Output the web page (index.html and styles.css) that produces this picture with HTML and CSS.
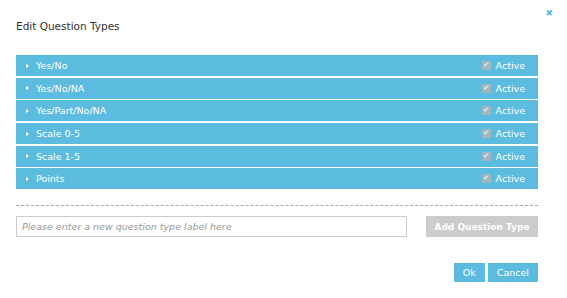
FILE: index.html
```html
<!DOCTYPE html>
<html lang="en">
<head>
    <meta charset="UTF-8">
    <title>Edit Question Types</title>
    <link rel="stylesheet" href="styles.css">
</head>
<body>
    <div class="modal">
        <div class="modal-header">
            <h2>Edit Question Types</h2>
            <span class="close" title="Close">&#x2716;</span>
        </div>

        <ul class="type-list">
            <li class="type-row"><span class="caret"></span><span class="label">Yes/No</span><span class="active"><span class="check">&#x2714;</span>Active</span></li>
            <li class="type-row"><span class="caret"></span><span class="label">Yes/No/NA</span><span class="active"><span class="check">&#x2714;</span>Active</span></li>
            <li class="type-row"><span class="caret"></span><span class="label">Yes/Part/No/NA</span><span class="active"><span class="check">&#x2714;</span>Active</span></li>
            <li class="type-row"><span class="caret"></span><span class="label">Scale 0-5</span><span class="active"><span class="check">&#x2714;</span>Active</span></li>
            <li class="type-row"><span class="caret"></span><span class="label">Scale 1-5</span><span class="active"><span class="check">&#x2714;</span>Active</span></li>
            <li class="type-row"><span class="caret"></span><span class="label">Points</span><span class="active"><span class="check">&#x2714;</span>Active</span></li>
        </ul>

        <div class="add-row">
            <input type="text" class="new-type" placeholder="Please enter a new question type label here">
            <button class="btn btn-disabled">Add Question Type</button>
        </div>

        <div class="modal-footer">
            <button class="btn btn-primary">Ok</button>
            <button class="btn btn-primary">Cancel</button>
        </div>
    </div>
</body>
</html>
```

FILE: styles.css
```css
body {
    margin: 0;
    font-family: "DejaVu Sans", Verdana, sans-serif;
    background: #ffffff;
    color: #333;
}
.modal {
    width: 522px;
    padding: 0 29px 0 16px;
}
.modal-header {
    position: relative;
    height: 55px;
}
.modal-header h2 {
    margin: 0;
    padding-top: 20px;
    font-size: 10.5px;
    font-weight: normal;
    color: #333;
}
.close {
    position: absolute;
    right: -15px;
    top: 8px;
    font-size: 9px;
    color: #5bbde0;
}
.type-list {
    list-style: none;
    margin: 0;
    padding: 0 0 14px;
    border-bottom: 1px dashed #aaa;
}
.type-row {
    display: flex;
    align-items: center;
    height: 21px;
    margin-bottom: 1.7px;
    padding: 0 13px 0 10px;
    background: #5bbcdf;
    color: #fff;
    font-size: 9.5px;
}
.caret {
    width: 0;
    height: 0;
    border-top: 2.5px solid transparent;
    border-bottom: 2.5px solid transparent;
    border-left: 3px solid #fff;
    margin-right: 7px;
}
.label {
    flex: 1;
}
.active {
    display: flex;
    align-items: center;
}
.check {
    width: 9px;
    height: 9px;
    margin-right: 5px;
    background: #9fb7c0;
    color: #eaf2f5;
    font-size: 7px;
    line-height: 9px;
    text-align: center;
}
.add-row {
    display: flex;
    justify-content: space-between;
    margin-top: 10px;
}
.new-type {
    box-sizing: border-box;
    width: 391px;
    height: 21px;
    padding: 0 5px;
    border: 1px solid #ccc;
    font-family: "DejaVu Sans", Verdana, sans-serif;
    font-size: 9.5px;
}
.new-type::placeholder {
    color: #999;
    font-style: italic;
}
.btn {
    border: none;
    color: #fff;
    font-family: "DejaVu Sans", Verdana, sans-serif;
    font-size: 9.5px;
    white-space: nowrap;
    cursor: pointer;
}
.btn-disabled {
    width: 112px;
    height: 21px;
    padding: 0;
    background: #ccc;
    font-weight: bold;
    font-size: 9px;
}
.modal-footer {
    display: flex;
    justify-content: flex-end;
    gap: 3px;
    margin-top: 26px;
}
.btn-primary {
    height: 19px;
    padding: 0 9px;
    background: #5bbcdf;
}
```
